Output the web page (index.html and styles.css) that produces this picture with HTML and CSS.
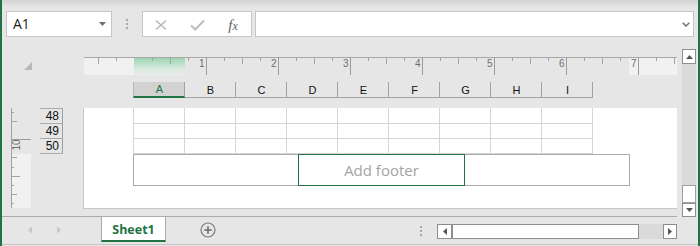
FILE: index.html
```html
<!DOCTYPE html>
<html lang="en">
<head>
<meta charset="utf-8">
<title>Sheet1 - Page Layout</title>
<link rel="stylesheet" href="styles.css">
</head>
<body>
<div class="app">
  <div class="formula-bar">
    <div class="namebox">
      <span class="ref">A1</span>
      <svg class="dd" width="7" height="4" viewBox="0 0 7 4"><polygon points="0,0 7,0 3.5,4" fill="#707070"/></svg>
    </div>
    <div class="grip"><i></i><i></i><i></i></div>
    <div class="fbuttons">
      <span class="fslot"><svg width="12" height="12" viewBox="0 0 12 12"><path d="M1 1.5L11 10.5M11 1.5L1 10.5" stroke="#b4b4b4" stroke-width="1.3" fill="none"/></svg></span>
      <span class="fslot"><svg width="15" height="12" viewBox="0 0 15 12"><path d="M1 6.5L5.2 10.5L14 1.5" stroke="#bdbdbd" stroke-width="2" fill="none"/></svg></span>
      <span class="fslot"><span class="fx">f<span class="fx-x">x</span></span></span>
    </div>
    <div class="finput">
      <svg width="8" height="5" viewBox="0 0 8 5"><path d="M0.7 0.7L4 4L7.3 0.7" stroke="#777" stroke-width="1.6" fill="none"/></svg>
    </div>
  </div>

  <div class="main">
    <div class="corner">
      <svg width="8" height="8" viewBox="0 0 8 8"><polygon points="8,0 8,8 0,8" fill="#b9b9b9"/></svg>
    </div>

    <div class="hruler">
      <svg width="593" height="18" viewBox="0 0 593 18">
        <defs>
          <linearGradient id="sel" x1="0" y1="0" x2="0" y2="1">
            <stop offset="0" stop-color="#98d2b0"/>
            <stop offset="0.6" stop-color="#d3eadc"/>
            <stop offset="1" stop-color="#ececec"/>
          </linearGradient>
        </defs>
        <rect x="0" y="0" width="50" height="18" fill="#f1f1f1"/>
        <rect x="50" y="0" width="51" height="18" fill="url(#sel)"/>
        <rect x="545" y="0" width="48" height="18" fill="#f1f1f1"/>
        <path d="M0 0.5H593" stroke="#a8a8a8" stroke-width="1"/>
        <path d="M32.5 0v4M68.5 0v4M104.5 0v4M140.5 0v4M176.5 0v4M212.5 0v4M248.5 0v4M284.5 0v4M320.5 0v4M356.5 0v4M392.5 0v4M428.5 0v4M464.5 0v4M500.5 0v4M536.5 0v4M572.5 0v4" stroke="#a3a3a3" stroke-width="1"/>
        <path d="M14.5 0v7M86.5 0v7M158.5 0v7M230.5 0v7M302.5 0v7M374.5 0v7M446.5 0v7M518.5 0v7M590.5 0v7" stroke="#a3a3a3" stroke-width="1"/>
        <path d="M122.5 0v18M194.5 0v18M266.5 0v18M338.5 0v18M410.5 0v18M482.5 0v18M554.5 0v18" stroke="#9c9c9c" stroke-width="1"/>
        <g class="rnum" text-anchor="end">
          <text x="120.5" y="10">1</text>
          <text x="192.5" y="10">2</text>
          <text x="264.5" y="10">3</text>
          <text x="336.5" y="10">4</text>
          <text x="408.5" y="10">5</text>
          <text x="480.5" y="10">6</text>
          <text x="552.5" y="10">7</text>
        </g>
      </svg>
    </div>

    <div class="colheads">
      <div class="ch sel">A</div>
      <div class="ch">B</div>
      <div class="ch">C</div>
      <div class="ch">D</div>
      <div class="ch">E</div>
      <div class="ch">F</div>
      <div class="ch">G</div>
      <div class="ch">H</div>
      <div class="ch">I</div>
    </div>

    <div class="vside">
      <svg class="vruler" width="20" height="100" viewBox="0 0 20 100">
        <rect x="1" y="46" width="19" height="54" fill="#f1f1f1"/>
        <path d="M0.5 0V100" stroke="#a3a3a3" stroke-width="1"/>
        <path d="M0 31.5H20" stroke="#9c9c9c" stroke-width="1"/>
        <path d="M1 4.5h2M1 13.5h5M1 49.5h5M1 59.5h2M1 68.5h8M1 77.5h2M1 86.5h5M1 95.5h2" stroke="#a3a3a3" stroke-width="1"/>
        <text class="rnum" x="9" y="37" text-anchor="middle" transform="rotate(-90 9 37)">10</text>
      </svg>
      <div class="rowheads">
        <div class="rh first">48</div>
        <div class="rh">49</div>
        <div class="rh">50</div>
      </div>
    </div>

    <div class="page">
      <div class="cells">
        <div class="row r48"><i></i><i></i><i></i><i></i><i></i><i></i><i></i><i></i><i></i></div>
        <div class="row"><i></i><i></i><i></i><i></i><i></i><i></i><i></i><i></i><i></i></div>
        <div class="row"><i></i><i></i><i></i><i></i><i></i><i></i><i></i><i></i><i></i></div>
      </div>
      <div class="footer">
        <div class="f-left"></div>
        <div class="f-mid">Add footer</div>
        <div class="f-right"></div>
      </div>
    </div>

    <div class="hline"></div>

    <div class="vscroll">
      <div class="sbtn up"><svg width="7" height="4" viewBox="0 0 7 4"><polygon points="0,4 7,4 3.5,0" fill="#555"/></svg></div>
      <div class="vtrack"></div>
      <div class="vthumb"></div>
      <div class="sbtn down"><svg width="7" height="4" viewBox="0 0 7 4"><polygon points="0,0 7,0 3.5,4" fill="#555"/></svg></div>
    </div>
  </div>

  <div class="tabbar">
    <div class="tabnav">
      <span class="navbtn"><svg width="16" height="16" viewBox="0 0 16 16"><polygon points="10,4.5 6,8 10,11.5" fill="#c6c6c6"/></svg></span>
      <span class="navbtn"><svg width="16" height="16" viewBox="0 0 16 16"><polygon points="6,4.5 10,8 6,11.5" fill="#c6c6c6"/></svg></span>
    </div>
    <div class="tab">Sheet1</div>
    <span class="addsheet"><svg width="16" height="16" viewBox="0 0 16 16"><circle cx="8" cy="8" r="7" fill="none" stroke="#7b7b7b" stroke-width="1.2"/><path d="M8 4.2V11.8M4.2 8H11.8" stroke="#6f6f6f" stroke-width="1.6"/></svg></span>
    <div class="hgrip"><i></i><i></i><i></i></div>
    <div class="hscroll">
      <div class="hbtn left"><svg width="4" height="7" viewBox="0 0 4 7"><polygon points="4,0 4,7 0,3.5" fill="#555"/></svg></div>
      <div class="hthumb"></div>
      <div class="htrack"></div>
      <div class="hbtn right"><svg width="4" height="7" viewBox="0 0 4 7"><polygon points="0,0 0,7 4,3.5" fill="#555"/></svg></div>
    </div>
  </div>
</div>
</body>
</html>
```

FILE: styles.css
```css
* {
  box-sizing: border-box;
  margin: 0;
  padding: 0;
}

html, body {
  width: 700px;
  height: 246px;
  overflow: hidden;
}

body {
  background: #e6e6e6;
  font-family: "Liberation Sans", Arial, sans-serif;
}

.app {
  width: 700px;
  height: 246px;
  border-left: 2px solid #217346;
  border-right: 2px solid #217346;
  background: linear-gradient(#d3d3d3 0, #e6e6e6 7px);
  display: flex;
  flex-direction: column;
}

/* ---------- formula bar ---------- */
.formula-bar {
  display: flex;
  height: 26px;
  margin-top: 11px;
  padding-left: 4px;
}

.namebox {
  width: 106px;
  background: #fff;
  border: 1px solid #c6c6c6;
  display: flex;
  align-items: center;
  justify-content: space-between;
  padding: 0 5px 0 6px;
}

.ref {
  font-family: "Open Sans", "Noto Sans", sans-serif;
  font-size: 14px;
  color: #222;
  line-height: 1;
}

.grip {
  width: 30px;
  display: flex;
  flex-direction: column;
  align-items: center;
  padding-top: 8px;
  gap: 2px;
}

.grip i, .hgrip i {
  display: block;
  width: 2px;
  height: 2px;
  background: #a9a9a9;
}

.fbuttons {
  width: 110px;
  background: #fff;
  border: 1px solid #c6c6c6;
  display: flex;
  align-items: center;
}

.fslot {
  width: 36px;
  display: flex;
  justify-content: center;
  align-items: center;
  padding-top: 2px;
}

.fx {
  font-family: "Liberation Serif", "Times New Roman", serif;
  font-style: italic;
  font-size: 15px;
  color: #5f5f5f;
  line-height: 1;
}

.fx-x {
  font-size: 12px;
}

.finput {
  width: 439px;
  margin-left: 3px;
  background: #fff;
  border: 1px solid #c6c6c6;
  display: flex;
  align-items: center;
  justify-content: flex-end;
  padding-right: 3px;
}

/* ---------- main sheet area ---------- */
.main {
  display: grid;
  grid-template-columns: 81px 594px 5px 14px 2px;
  grid-template-rows: 8px 18px 7px 16px 10px 101px 7px 1px;
  margin-top: 12px;
}

.corner {
  grid-column: 1;
  grid-row: 2 / 4;
  padding-left: 22px;
  padding-top: 5px;
  display: flex;
  align-items: flex-start;
}

.hruler {
  grid-column: 2;
  grid-row: 2;
  padding-left: 1px;
  display: flex;
}

.rnum {
  font-family: "Liberation Sans", Arial, sans-serif;
  font-size: 10px;
  fill: #6e6e6e;
}

.colheads {
  grid-column: 2;
  grid-row: 4;
  padding-left: 50px;
  display: flex;
}

.ch {
  width: 51px;
  height: 16px;
  border-right: 1px solid #a2a2a2;
  border-bottom: 1px solid #a2a2a2;
  font-size: 11px;
  color: #111;
  display: flex;
  align-items: center;
  justify-content: center;
  padding-left: 1px;
}

.ch.sel {
  width: 52px;
  border-left: 1px solid #b8b8b8;
  background: #d2d2d2;
  color: #217346;
  border-bottom: 2px solid #217346;
}

.vside {
  grid-column: 1;
  grid-row: 6;
  display: flex;
  align-items: flex-start;
  padding-left: 9px;
  gap: 9px;
}

.vruler {
  display: block;
}

.rowheads {
  width: 23px;
  display: flex;
  flex-direction: column;
}

.rh {
  height: 15px;
  border-right: 1px solid #9e9e9e;
  border-bottom: 1px solid #ababab;
  font-size: 12px;
  color: #111;
  display: flex;
  align-items: center;
  justify-content: flex-end;
  padding-right: 3px;
}

.rh.first {
  height: 16px;
  border-top: 1px solid #ababab;
}

.page {
  grid-column: 2;
  grid-row: 6;
  background: #fff;
  border-left: 1px solid #c8c8c8;
  border-bottom: 1px solid #c8c8c8;
  padding-left: 49px;
  display: flex;
  flex-direction: column;
}

.cells {
  width: 460px;
  border-left: 1px solid #d6d6d6;
  display: flex;
  flex-direction: column;
}

.row {
  display: flex;
  height: 15px;
}

.row.r48 {
  height: 16px;
}

.row i {
  display: block;
  width: 51px;
  border-right: 1px solid #d6d6d6;
  border-bottom: 1px solid #d6d6d6;
}

.footer {
  display: grid;
  grid-template-columns: 165px 167px 165px;
  height: 32px;
}

.f-left {
  border: 1px solid #ababab;
  border-right: none;
}

.f-right {
  border: 1px solid #ababab;
  border-left: none;
}

.f-mid {
  border: 1px solid #217346;
  display: flex;
  align-items: center;
  justify-content: center;
  font-family: "Open Sans", "Noto Sans", sans-serif;
  font-size: 15px;
  color: #a4a4a4;
  padding-bottom: 1px;
}

.hline {
  grid-column: 1 / 3;
  grid-row: 8;
  background: #ababab;
}

.vscroll {
  grid-column: 4;
  grid-row: 1 / 9;
  display: flex;
  flex-direction: column;
  background: #dadada;
}

.sbtn {
  background: #fff;
  border: 1px solid #8e8e8e;
  display: flex;
  align-items: center;
  justify-content: center;
}

.sbtn.up {
  height: 15px;
}

.sbtn.down {
  height: 14px;
}

.vtrack {
  flex: 1;
}

.vthumb {
  height: 18px;
  background: #fff;
  border: 1px solid #a0a0a0;
}

/* ---------- sheet tab bar ---------- */
.tabbar {
  height: 28px;
  border-bottom: 1px solid #c6c6c6;
  display: flex;
  align-items: flex-start;
}

.tabnav {
  width: 99px;
  display: flex;
  padding-left: 20px;
  padding-top: 5px;
  gap: 13px;
}

.navbtn, .addsheet {
  display: flex;
  width: 16px;
  height: 16px;
}

.tab {
  width: 65px;
  height: 25px;
  background: #fff;
  border-left: 1px solid #ababab;
  border-right: 1px solid #ababab;
  border-bottom: 2px solid #217346;
  font-family: "Open Sans", "Noto Sans", sans-serif;
  font-weight: 700;
  font-size: 12.5px;
  color: #217346;
  display: flex;
  align-items: center;
  justify-content: center;
  padding-top: 1px;
}

.addsheet {
  margin-left: 34px;
  margin-top: 5px;
}

.hgrip {
  margin-left: auto;
  margin-top: 9px;
  display: flex;
  flex-direction: column;
  gap: 2px;
}

.hscroll {
  width: 240px;
  height: 15px;
  margin-left: 15px;
  margin-right: 21px;
  margin-top: 7px;
  display: flex;
  background: #dadada;
}

.hbtn {
  background: #fff;
  border: 1px solid #8e8e8e;
  display: flex;
  align-items: center;
  justify-content: center;
}

.hbtn.left {
  width: 15px;
}

.hbtn.right {
  width: 14px;
}

.hthumb {
  width: 187px;
  background: #fff;
  border: 1px solid #8e8e8e;
}

.htrack {
  flex: 1;
}
```
